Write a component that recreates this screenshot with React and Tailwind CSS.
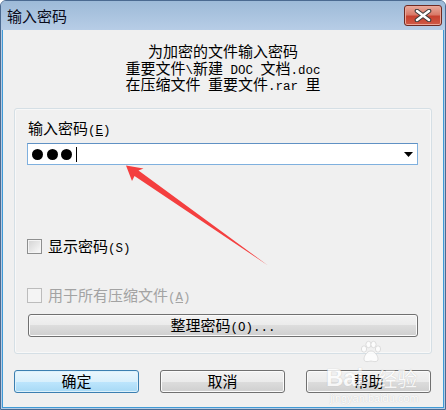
import React from "react";

const CJK = "font-['Noto_Sans_CJK_SC','Noto_Sans',sans-serif]";

function Mono({ children, className = "" }) {
  return (
    <span className={"font-['Liberation_Mono',monospace] text-[12.5px] leading-[8px] whitespace-pre " + className}>
      {children}
    </span>
  );
}

function Mixed({ text }) {
  const parts = text.match(/[\x20-\x7e]+|[^\x20-\x7e]+/g) || [];
  return (
    <>
      {parts.map((p, i) =>
        /^[\x20-\x7e]+$/.test(p) ? <Mono key={i}>{p}</Mono> : <span key={i}>{p}</span>
      )}
    </>
  );
}

function Btn({ children, def = false, className = "" }) {
  return (
    <div
      className={
        "h-[23px] rounded-[3px] border flex items-center justify-center text-[15px] leading-[16.5px] text-black " +
        (def
          ? "border-[#3c7fb1] bg-[linear-gradient(#eaf6fd_0%,#d9f0fc_50%,#bee6fd_50%,#a7d9f5_100%)] shadow-[inset_0_0_0_1px_#ddf1fb] "
          : "border-[#707070] bg-[linear-gradient(#f2f2f2_0%,#ebebeb_50%,#dddddd_50%,#cfcfcf_100%)] shadow-[inset_0_0_0_1px_#fbfbfb] ") +
        className
      }
    >
      <span className="h-[16.5px] leading-[16.5px]">{children}</span>
    </div>
  );
}

export default function App() {
  return (
    <div className={"relative w-[446px] h-[410px] overflow-hidden bg-white " + CJK}>
      <div className="w-[446px] h-[410px] flex flex-col bg-[#b4cbe4] border border-[#4b6a91] rounded-t-[6px]">
        {/* title bar */}
        <div className="h-[29px] flex items-center justify-between pl-[6px] pr-[3px] rounded-t-[5px] bg-[linear-gradient(#9dbad8,#b7cde6)]">
          <span className="text-[15px] leading-[18px] text-[#0a0a1a]">输入密码</span>
          <div className="w-[38px] h-[21px] rounded-[3px] border border-[#6e2a22] bg-[linear-gradient(#e9a99b_0%,#d97a69_45%,#c7412f_55%,#cf5a46_100%)] shadow-[inset_0_0_0_1px_#eba79a] flex items-center justify-center">
            <svg width="18" height="13" viewBox="0 0 18 13">
              <path d="M3 2 L15 11 M15 2 L3 11" stroke="#3b3b3b" strokeWidth="4.6" strokeLinecap="round" />
              <path d="M3 2 L15 11 M15 2 L3 11" stroke="#ffffff" strokeWidth="2.6" strokeLinecap="round" />
            </svg>
          </div>
        </div>

        {/* content */}
        <div className="flex-1 mx-[1px] mb-[1px] bg-[#f0f0f0] border-x border-b border-[#3f9ad6] flex flex-col text-black">
          <div className="pt-[13px] text-center text-[15px] leading-[16.5px]">
            <div className="h-[16.5px]">为加密的文件输入密码</div>
            <div className="h-[16.5px]">
              <Mixed text="重要文件\新建 DOC 文档.doc" />
            </div>
            <div className="h-[16.5px]">
              <Mixed text="在压缩文件 重要文件.rar 里" />
            </div>
          </div>

          {/* group box */}
          <div className="mt-[15.5px] mx-[11px] border border-[#d5dfe5] rounded-[3px] pt-[11px] pb-[16px] pl-[12px] pr-[13px] flex flex-col shadow-[inset_0_0_0_1px_#f8f8f8]">
            <div className="h-[16.5px] text-[15px] leading-[16.5px] pl-[1px]">
              输入密码<Mono>(</Mono>
              <Mono className="underline">E</Mono>
              <Mono>)</Mono>
            </div>
            <div className="relative mt-[6.5px] h-[22px] w-[391px] border border-[#7fb0de] border-t-[#5f91c4] bg-white flex items-center pl-[4px]">
              <div className="w-[11px] h-[11px] rounded-full bg-black" />
              <div className="w-[11px] h-[11px] rounded-full bg-black ml-[3.5px]" />
              <div className="w-[11px] h-[11px] rounded-full bg-black ml-[3.5px]" />
              <div className="w-[1px] h-[15px] bg-black ml-[4px]" />
              <svg className="absolute right-[4px] top-[8px]" width="9" height="5" viewBox="0 0 9 5">
                <path d="M0 0 H9 L4.5 5 Z" fill="#000" />
              </svg>
            </div>

            <div className="mt-[74px] h-[15px] flex items-center">
              <div className="w-[15px] h-[15px] border border-[#8e8f8f] bg-[linear-gradient(135deg,#d2d2d2,#fbfbfb)] shadow-[inset_0_0_0_1px_#f4f4f4]" />
              <span className="ml-[6px] h-[16.5px] text-[15px] leading-[16.5px]">
                显示密码<Mono>(S)</Mono>
              </span>
            </div>

            <div className="mt-[34px] h-[15px] flex items-center text-[#a3a3a3]">
              <div className="w-[15px] h-[15px] border border-[#bcbcbc] bg-[#f4f4f4]" />
              <span className="ml-[6px] h-[16.5px] text-[15px] leading-[16.5px]">
                用于所有压缩文件<Mono>(</Mono>
                <Mono className="underline">A</Mono>
                <Mono>)</Mono>
              </span>
            </div>

            <Btn className="mt-[11px] ml-[1px] w-[390px]">
              整理密码<Mono>(O)...</Mono>
            </Btn>
          </div>

          {/* bottom buttons */}
          <div className="mt-[16px] ml-[11px] flex gap-[21px]">
            <Btn def className="w-[125px]">确定</Btn>
            <Btn className="w-[125px]">取消</Btn>
            <Btn className="w-[125px]">帮助</Btn>
          </div>
        </div>
      </div>

      {/* red arrow annotation */}
      <svg className="absolute left-0 top-0 pointer-events-none" width="446" height="410" viewBox="0 0 446 410">
        <path
          d="M126 165.5 L143.5 168.5 L138.5 170.5 L268 265.5 L134.5 176 L132 181 Z"
          fill="#f43f3f"
        />
      </svg>

      {/* watermark */}
      <div className="absolute left-[326px] top-[340px] pointer-events-none opacity-80">
        <svg className="absolute left-[32px] top-[0px]" width="24" height="24" viewBox="0 0 24 24">
          <g fill="#ffffff" stroke="#cfcfcf" strokeWidth="0.8">
            <ellipse cx="6" cy="9" rx="2.6" ry="3.2" />
            <ellipse cx="10.5" cy="4.5" rx="2.6" ry="3.2" />
            <ellipse cx="15.5" cy="4.5" rx="2.6" ry="3.2" />
            <ellipse cx="20" cy="9" rx="2.6" ry="3.2" />
            <path d="M13 11 C9 11 6 16 6 19 C6 22 9 22 13 21 C17 22 20 22 20 19 C20 16 17 11 13 11 Z" />
          </g>
        </svg>
        <div className="absolute left-0 top-[26px] flex items-end whitespace-nowrap">
          <span className="font-['Liberation_Sans',sans-serif] font-bold text-[24px] leading-[24px] text-white [text-shadow:0_0_1px_#b0b0b0]">
            Bai
          </span>
          <span className="ml-[14px] text-[20px] leading-[22px] text-white [text-shadow:0_0_1px_#b0b0b0]">经验</span>
        </div>
        <div className="absolute left-[4px] top-[52px] whitespace-nowrap font-['Liberation_Sans',sans-serif] text-[11px] leading-[12px] text-white [text-shadow:0_0_1px_#b8b8b8]">
          jingyan.baidu.com
        </div>
      </div>
    </div>
  );
}
